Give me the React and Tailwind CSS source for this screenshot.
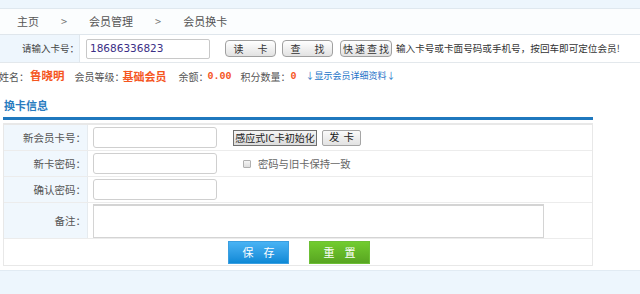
import React from 'react';

const cjk = { fontFamily: '"Noto Sans CJK SC", "Noto Sans", sans-serif' };

function GrayButton({ children, className = '' }) {
    return (
        <button
            className={`h-[17px] rounded-[4px] border border-[#a0a0a0] bg-gradient-to-b from-white to-[#e2e2e2] text-[10px] leading-none text-[#333] whitespace-nowrap flex items-center justify-center ${className}`}
        >
            {children}
        </button>
    );
}

function Label({ children }) {
    return (
        <div className="w-[84px] shrink-0 bg-[#f0f7fd] border-r border-[#e6ebef] flex items-center justify-end pr-[1px] text-[10.5px] text-[#555]">
            {children}
        </div>
    );
}

export default function App() {
    return (
        <div className="w-[640px] h-[294px] overflow-hidden bg-white flex flex-col text-[#555]" style={cjk}>
            {/* top strip */}
            <div className="h-[9px] shrink-0 bg-[#edf6fd] border-b border-[#dfe8ef]" />

            {/* breadcrumb */}
            <div className="h-[26px] shrink-0 bg-[#fbfdfe] border-b border-[#dfe6ec] flex items-center pl-[17px] gap-[22px] text-[11px] text-[#555]">
                <span>主页</span>
                <span className="text-[#777]">&gt;</span>
                <span>会员管理</span>
                <span className="text-[#777]">&gt;</span>
                <span>会员换卡</span>
            </div>

            {/* card search */}
            <div className="h-[28px] shrink-0 border-b border-[#e3e8ec] flex items-center">
                <div className="w-[80px] h-full bg-[#eef6fd] border-r border-[#e0e7ed] flex items-center justify-end text-[9.5px] text-[#444]">
                    请输入卡号：
                </div>
                <div className="ml-[6px] w-[124px] h-[20px] border border-[#c8c8c8] rounded-[2px] flex items-center pl-[3px] text-[10.5px] text-[#3b2f86]" style={{ fontFamily: '"DejaVu Sans", sans-serif' }}>
                    18686336823
                </div>
                <GrayButton className="ml-[15px] w-[51px] gap-[14px]"><span>读</span><span>卡</span></GrayButton>
                <GrayButton className="ml-[6px] w-[51px] gap-[14px]"><span>查</span><span>找</span></GrayButton>
                <GrayButton className="ml-[7px] w-[52px] gap-[2px]"><span>快</span><span>速</span><span>查</span><span>找</span></GrayButton>
                <span className="ml-[4px] text-[9.6px] text-[#333] whitespace-nowrap">输入卡号或卡面号码或手机号，按回车即可定位会员!</span>
            </div>

            {/* member info */}
            <div className="h-[26px] shrink-0 flex items-center ml-[-1px] text-[10px] text-[#555] whitespace-nowrap">
                <span>姓名：</span>
                <span className="ml-[1px] text-[11.5px] font-bold text-[#f5561f]">鲁晓明</span>
                <span className="ml-[10px]">会员等级：</span>
                <span className="ml-[-2px] text-[11px] font-bold text-[#f5561f]">基础会员</span>
                <span className="ml-[12px]">余额：</span>
                <span className="ml-[-1px] text-[10px] font-bold text-[#f5561f]" style={{ fontFamily: '"Liberation Mono", monospace' }}>0.00</span>
                <span className="ml-[9px]">积分数量：</span>
                <span className="text-[10px] font-bold text-[#f5561f]" style={{ fontFamily: '"Liberation Mono", monospace' }}>0</span>
                <span className="ml-[9px] text-[9px] text-[#2273c8]">↓显示会员详细资料↓</span>
            </div>

            {/* section title */}
            <div className="ml-[3px] w-[590px] h-[31px] shrink-0 pt-[5px] flex items-center border-b-[3px] border-[#1f78be]">
                <span className="ml-[1px] text-[11px] font-bold text-[#2a7cbf]">换卡信息</span>
            </div>

            {/* form */}
            <div className="ml-[3px] mt-[3px] w-[590px] shrink-0 border border-[#e8e8e8] border-t-2 flex flex-col">
                <div className="h-[26px] flex border-b border-[#ececec]">
                    <Label>新会员卡号：</Label>
                    <div className="flex-1 flex items-center pl-[5px]">
                        <div className="w-[124px] h-[21px] border border-[#cfcfcf] rounded-[3px] bg-white" />
                        <button className="ml-[16px] h-[16px] w-[84px] border border-[#6f6f6f] bg-gradient-to-b from-[#f4f4f4] to-[#dcdcdc] text-[10px] leading-none text-[#222] whitespace-nowrap flex items-center justify-center">
                            感应式IC卡初始化
                        </button>
                        <button className="ml-[5px] h-[16px] w-[39px] rounded-[2px] border border-[#a5a5a5] bg-gradient-to-b from-[#fafafa] to-[#e2e2e2] text-[10.5px] leading-none text-[#222] whitespace-nowrap flex items-center justify-center gap-[4px]">
                            <span>发</span><span>卡</span>
                        </button>
                    </div>
                </div>
                <div className="h-[26px] flex border-b border-[#ececec]">
                    <Label>新卡密码：</Label>
                    <div className="flex-1 flex items-center pl-[5px]">
                        <div className="w-[124px] h-[21px] border border-[#cfcfcf] rounded-[3px] bg-white" />
                        <div className="ml-[26px] w-[8px] h-[8px] border border-[#b0b0b0] rounded-[1px] bg-gradient-to-b from-[#f5f5f5] to-[#dedede]" />
                        <span className="ml-[7px] text-[10.3px] text-[#666]">密码与旧卡保持一致</span>
                    </div>
                </div>
                <div className="h-[26px] flex border-b border-[#ececec]">
                    <Label>确认密码：</Label>
                    <div className="flex-1 flex items-center pl-[5px]">
                        <div className="w-[124px] h-[21px] border border-[#cfcfcf] rounded-[3px] bg-white" />
                    </div>
                </div>
                <div className="h-[36px] flex border-b border-[#ececec]">
                    <Label>备注：</Label>
                    <div className="flex-1 flex items-start pl-[5px] pt-[1px]">
                        <div className="w-[451px] h-[34px] border border-[#d4d4d4] border-t-2 bg-white" />
                    </div>
                </div>
                <div className="h-[26px] flex items-center">
                    <div className="ml-[224px] w-[61px] h-[23px] border border-[#3a9ee0] bg-gradient-to-b from-[#48b3f4] to-[#0b89d6] flex items-center justify-center gap-[10px] text-[11px] text-white">
                        <span>保</span><span>存</span>
                    </div>
                    <div className="ml-[20px] w-[61px] h-[23px] border border-[#6cbf35] bg-gradient-to-b from-[#72cc2f] to-[#58a521] flex items-center justify-center gap-[10px] text-[11px] text-white">
                        <span>重</span><span>置</span>
                    </div>
                </div>
            </div>

            {/* bottom strip */}
            <div className="mt-[4px] flex-1 bg-[#edf6fd] border-t border-[#e1ebf3]" />
        </div>
    );
}
